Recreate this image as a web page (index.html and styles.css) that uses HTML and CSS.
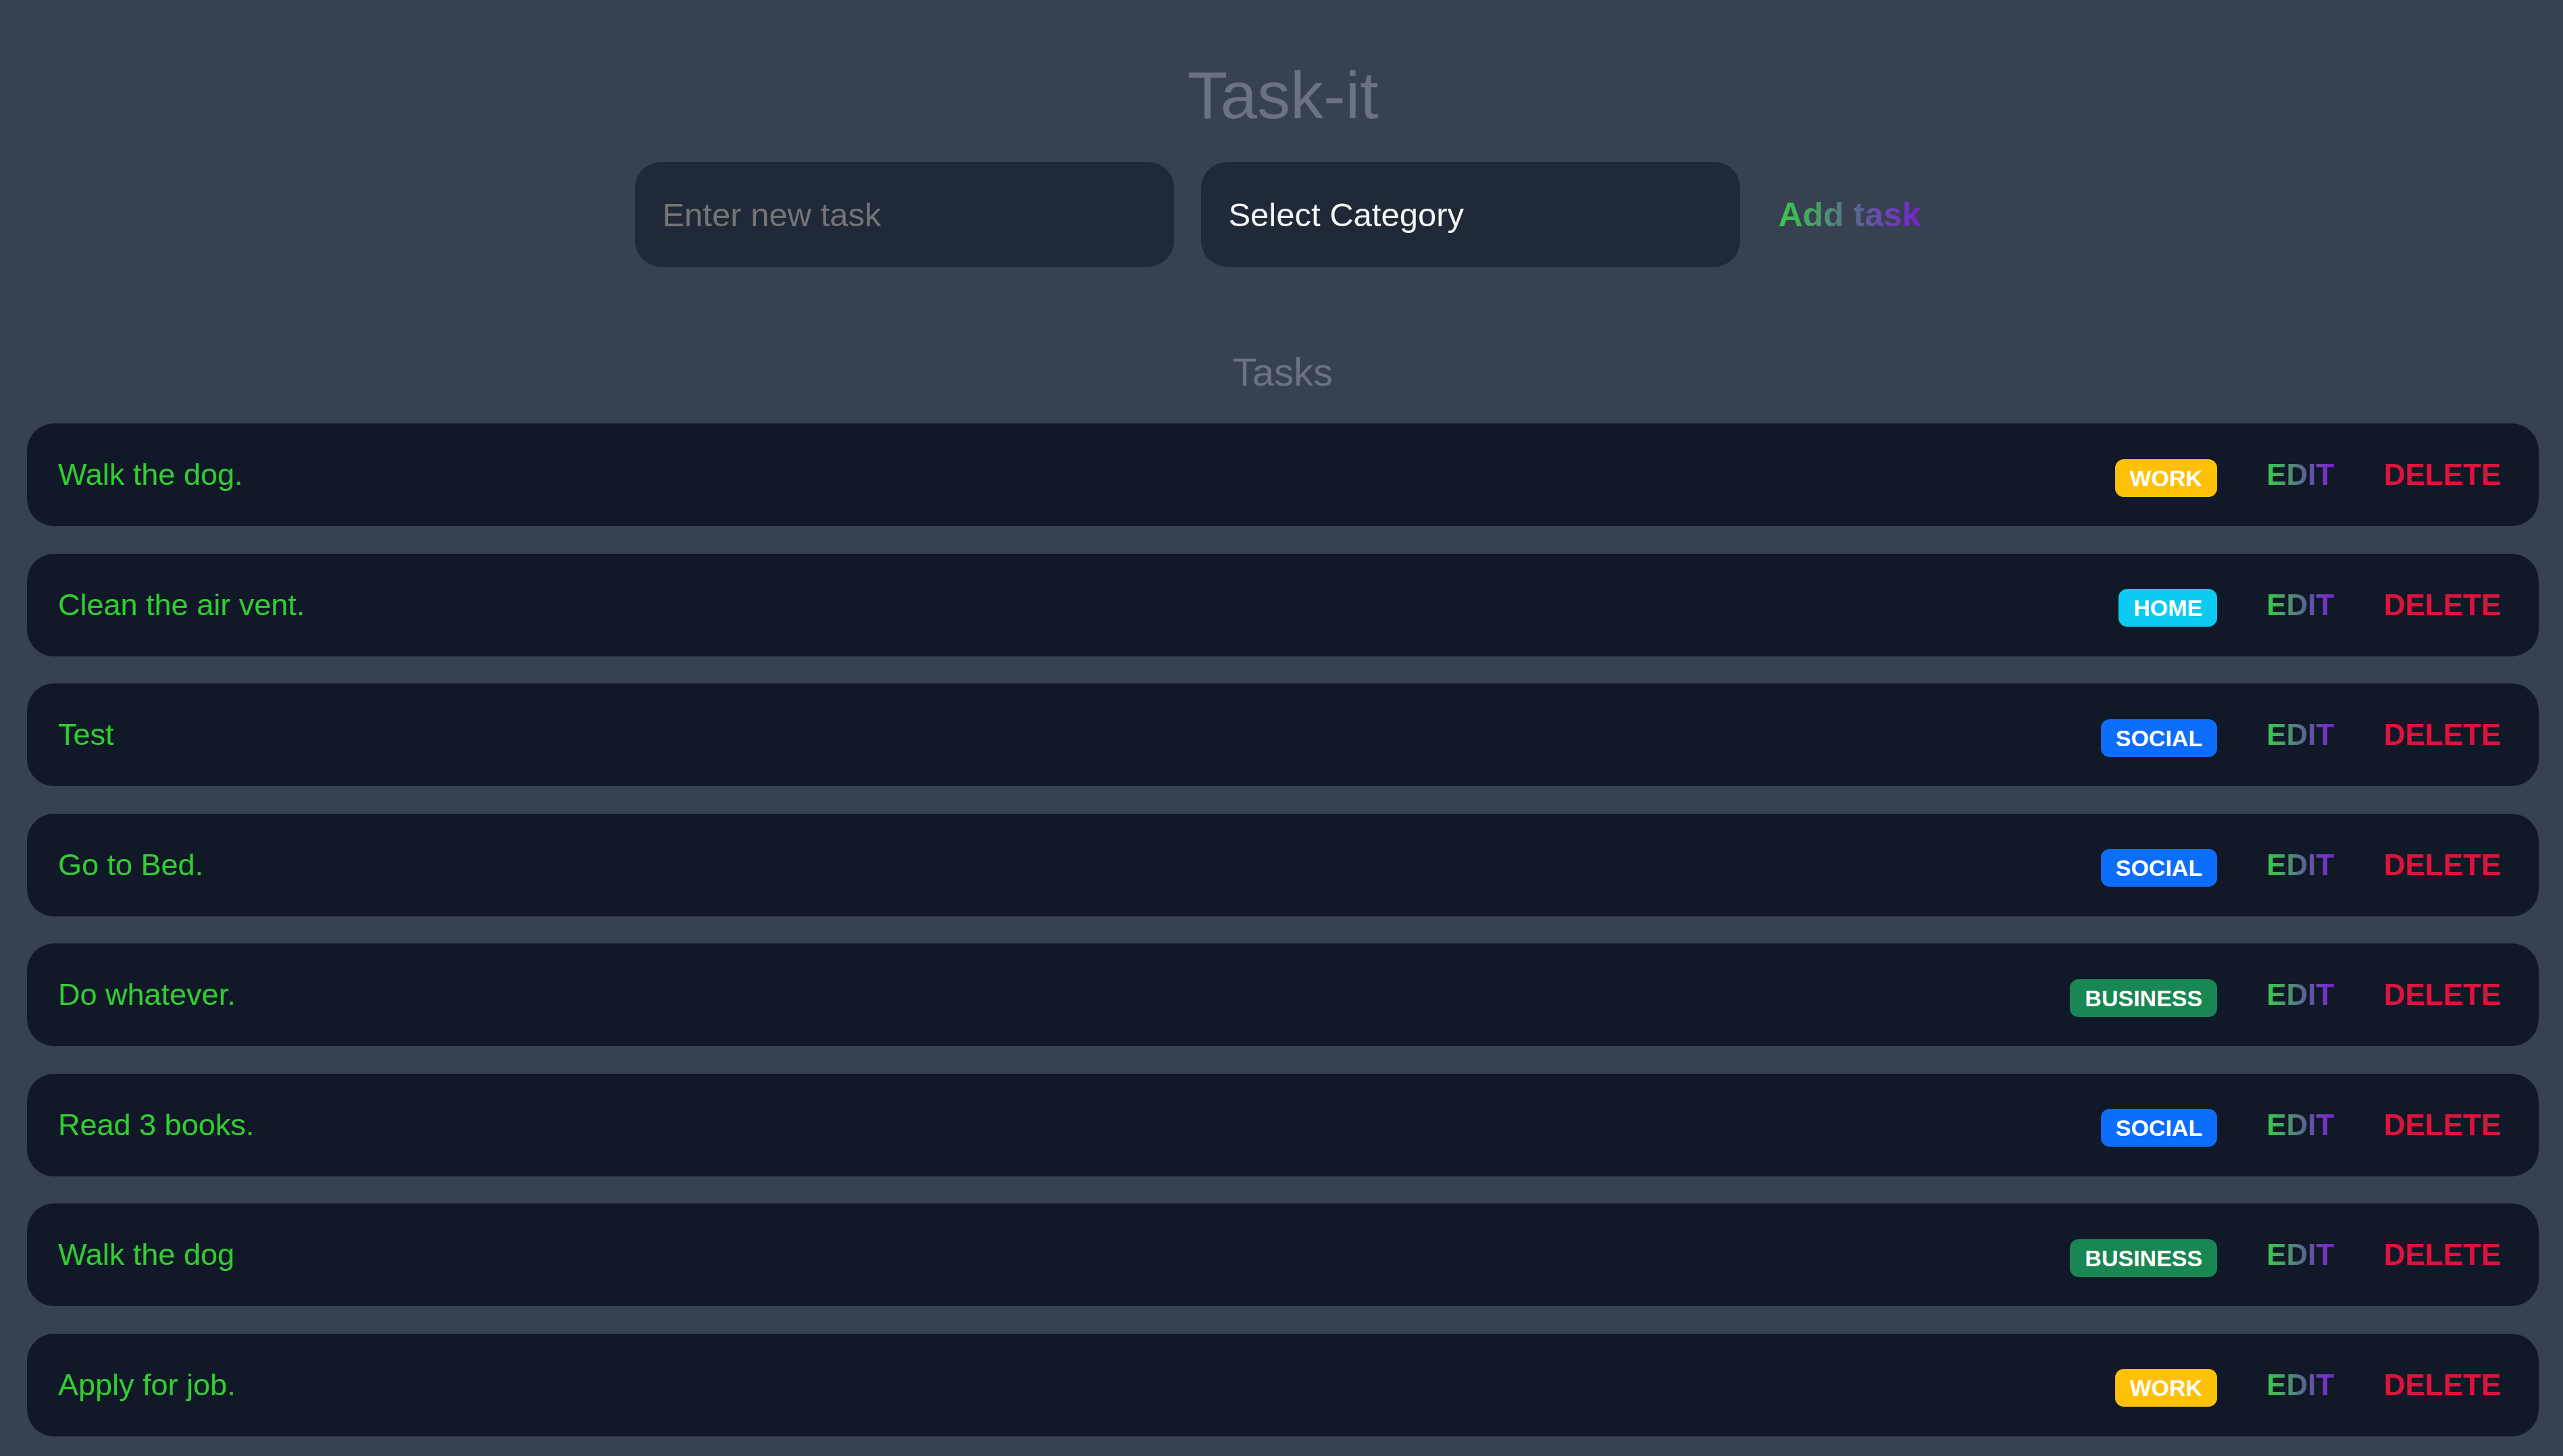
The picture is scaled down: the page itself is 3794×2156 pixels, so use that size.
FILE: index.html
```html
<!DOCTYPE html>
<html lang="en">
<head>
<meta charset="utf-8">
<title>Task-it</title>
<link rel="stylesheet" href="styles.css">
</head>
<body>
<div class="app">
  <h1 class="title">Task-it</h1>
  <form class="new-task" onsubmit="return false">
    <input class="field" type="text" placeholder="Enter new task">
    <select class="field select">
      <option>Select Category</option>
      <option>Work</option>
      <option>Home</option>
      <option>Social</option>
      <option>Business</option>
    </select>
    <button class="add-btn" type="submit"><span class="grad">Add task</span></button>
  </form>
  <h2 class="subtitle">Tasks</h2>
  <ul class="task-list">
    <li class="task"><span class="task-text">Walk the dog.</span><div class="actions"><span class="badge work">WORK</span><button class="edit"><span class="grad">EDIT</span></button><button class="delete">DELETE</button></div></li>
    <li class="task"><span class="task-text">Clean the air vent.</span><div class="actions"><span class="badge home">HOME</span><button class="edit"><span class="grad">EDIT</span></button><button class="delete">DELETE</button></div></li>
    <li class="task"><span class="task-text">Test</span><div class="actions"><span class="badge social">SOCIAL</span><button class="edit"><span class="grad">EDIT</span></button><button class="delete">DELETE</button></div></li>
    <li class="task"><span class="task-text">Go to Bed.</span><div class="actions"><span class="badge social">SOCIAL</span><button class="edit"><span class="grad">EDIT</span></button><button class="delete">DELETE</button></div></li>
    <li class="task"><span class="task-text">Do whatever.</span><div class="actions"><span class="badge business">BUSINESS</span><button class="edit"><span class="grad">EDIT</span></button><button class="delete">DELETE</button></div></li>
    <li class="task"><span class="task-text">Read 3 books.</span><div class="actions"><span class="badge social">SOCIAL</span><button class="edit"><span class="grad">EDIT</span></button><button class="delete">DELETE</button></div></li>
    <li class="task"><span class="task-text">Walk the dog</span><div class="actions"><span class="badge business">BUSINESS</span><button class="edit"><span class="grad">EDIT</span></button><button class="delete">DELETE</button></div></li>
    <li class="task"><span class="task-text">Apply for job.</span><div class="actions"><span class="badge work">WORK</span><button class="edit"><span class="grad">EDIT</span></button><button class="delete">DELETE</button></div></li>
  </ul>
</div>
</body>
</html>
```

FILE: styles.css
```css
html, body {
  margin: 0;
  padding: 0;
  background: #374151;
  height: 100%;
}
body {
  font-family: "Liberation Sans", Arial, sans-serif;
  overflow: hidden;
}
.app {
  padding: 92px 36px 0 40px;
}
.title {
  margin: 0;
  text-align: center;
  font-size: 98px;
  line-height: 98px;
  font-weight: 400;
  color: #6b7280;
}
.new-task {
  margin: 50px 0 0 0;
  display: flex;
  justify-content: center;
  align-items: center;
  gap: 40px;
}
.field {
  box-sizing: border-box;
  width: 798px;
  height: 155px;
  border: none;
  border-radius: 38px;
  background: #1f2937;
  font-family: "Liberation Sans", Arial, sans-serif;
  font-size: 49px;
  color: #ffffff;
  padding: 0 40px;
  outline: none;
}
.field::placeholder {
  color: #757575;
}
.select {
  appearance: none;
  -webkit-appearance: none;
  color: #f5f5f5;
}
.add-btn {
  background: none;
  border: none;
  padding: 0 14px 0 16px;
  font-family: "Liberation Sans", Arial, sans-serif;
  font-size: 50px;
  font-weight: 700;
  cursor: pointer;
}
.grad {
  background: linear-gradient(90deg, #36cc48 0%, #4b9a6a 30%, #5a668f 55%, #6a47b5 75%, #7a1fd0 100%);
  -webkit-background-clip: text;
  background-clip: text;
  color: transparent;
}
.subtitle {
  margin: 127px 0 0 0;
  text-align: center;
  font-size: 58px;
  line-height: 58px;
  font-weight: 400;
  color: #6b7280;
}
.task-list {
  list-style: none;
  margin: 47px 0 0 0;
  padding: 0;
  display: flex;
  flex-direction: column;
  gap: 40.5px;
}
.task {
  box-sizing: border-box;
  height: 152px;
  background: #111827;
  border-radius: 40px;
  display: flex;
  align-items: center;
  justify-content: space-between;
  padding: 0 56px 0 46px;
}
.task-text {
  font-size: 45px;
  color: #32cd32;
}
.actions {
  display: flex;
  align-items: center;
  gap: 73px;
}
.badge {
  font-size: 34px;
  font-weight: 700;
  line-height: 1;
  color: #ffffff;
  padding: 11px 22px;
  border-radius: 13px;
  margin-top: 9px;
}
.badge.work { background: #ffc107; }
.badge.home { background: #0dcaf0; }
.badge.social { background: #0d6efd; }
.badge.business { background: #198754; }
.edit, .delete {
  background: none;
  border: none;
  padding: 0;
  font-family: "Liberation Sans", Arial, sans-serif;
  font-size: 44px;
  font-weight: 700;
  cursor: pointer;
}
.delete {
  color: #dc143c;
}
```
